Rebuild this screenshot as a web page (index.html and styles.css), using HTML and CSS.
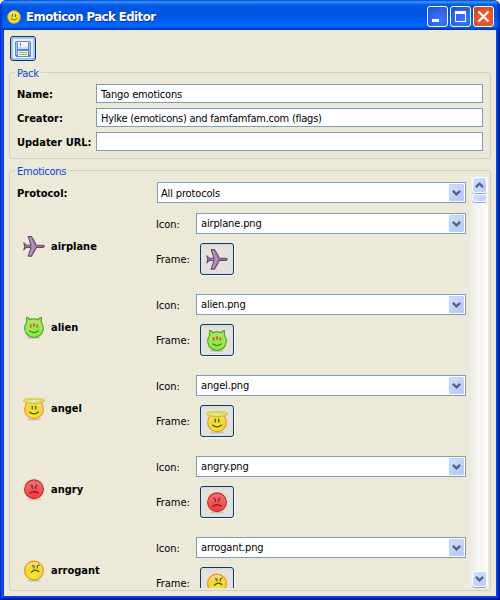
FILE: index.html
```html
<!DOCTYPE html>
<html lang="en">
<head>
<meta charset="utf-8">
<title>Emoticon Pack Editor</title>
<link rel="stylesheet" href="styles.css">
</head>
<body>
<svg class="defs" width="0" height="0" aria-hidden="true">
  <defs>
    <radialGradient id="gold" cx=".5" cy=".75" r=".75"><stop offset="0" stop-color="#f5ea25"/><stop offset=".6" stop-color="#edd83c"/><stop offset="1" stop-color="#f7e987"/></radialGradient>
    <radialGradient id="lime" cx=".5" cy=".85" r=".8"><stop offset="0" stop-color="#86ed36"/><stop offset="1" stop-color="#a8e86c"/></radialGradient>
    <radialGradient id="rose" cx=".5" cy=".85" r=".85"><stop offset="0" stop-color="#ff3535"/><stop offset="1" stop-color="#ec7373"/></radialGradient>
    <linearGradient id="plum"><stop offset="0" stop-color="#ad8bb0"/><stop offset="1" stop-color="#9a779e"/></linearGradient>
    <linearGradient id="disk" x2="1" y2="1"><stop offset="0" stop-color="#6f9be0"/><stop offset="1" stop-color="#4a72bd"/></linearGradient>
  </defs>
  <symbol id="airplane" viewBox="0 0 24 24">
    <path d="M6.2 1.5H9.4L12.5 6.5L14.2 10.2H21.3L22.4 11.3L21.3 12.4H14.2L12.5 16L9.4 21.1H6.2L9 12.4H4.2L1.8 14.8L2.8 11.3L1.8 7.8L4.2 10.2H9Z" fill="url(#plum)" stroke="#6b4673" stroke-width="1.1" stroke-linejoin="round"/>
    <path d="M8 2.8L11.6 11.3L8 19.8" fill="none" stroke="#c6aec8" stroke-width=".8"/>
  </symbol>
  <symbol id="alien" viewBox="0 0 24 24">
    <ellipse cx="12" cy="21.7" rx="7" ry="1.2" fill="#777" opacity=".3"/>
    <path d="M4.6 6.5V1.6C6 1.3 7 2.3 7.6 3.6Q12 2 16.4 3.6C17 2.3 18 1.3 19.4 1.6V6.5A9.3 9.3 0 1 1 4.6 6.5Z" fill="url(#lime)" stroke="#58a61b" stroke-width="1.2"/>
    <path d="M8.7 8.3v3.4M12 7.3v3.4M15.3 8.3v3.4" stroke="#d5641c" stroke-width="1.8"/>
    <path d="M7.3 14.6Q12 18.4 16.7 14.6" fill="none" stroke="#3c7525" stroke-width="1.2"/>
  </symbol>
  <symbol id="angel" viewBox="0 0 24 24">
    <ellipse cx="12" cy="22.3" rx="7" ry="1.2" fill="#777" opacity=".3"/>
    <circle cx="12" cy="12.3" r="9.4" fill="url(#gold)" stroke="#f09020" stroke-width="1.2"/>
    <path d="M10.3 8.7v3.8M13.7 8.7v3.8" stroke="#66591c" stroke-width="1.4"/>
    <path d="M7.3 14.8Q12 19 16.7 14.8" fill="none" stroke="#554b1c" stroke-width="1.2"/>
    <ellipse cx="12" cy="3.8" rx="10" ry="2.1" fill="#e9e5b3" stroke="#c5bd30" stroke-width="2"/>
    <ellipse cx="12" cy="3.6" rx="10" ry="1.9" fill="none" stroke="#f1ec61" stroke-width=".9"/>
  </symbol>
  <symbol id="angry" viewBox="0 0 24 24">
    <ellipse cx="12" cy="21.4" rx="7" ry="1.2" fill="#777" opacity=".3"/>
    <circle cx="12" cy="11.3" r="9.4" fill="url(#rose)" stroke="#c22b32" stroke-width="1.2"/>
    <path d="M8.4 7l2.2 1.3M15.6 7l-2.2 1.3M10.3 8v3M13.7 8v3" fill="none" stroke="#743133" stroke-width="1.3"/>
    <path d="M7.3 15.6Q12 11.6 16.7 15.6" fill="none" stroke="#68292b" stroke-width="1.3"/>
  </symbol>
  <symbol id="arrogant" viewBox="0 0 24 24">
    <ellipse cx="12" cy="21.6" rx="7" ry="1.2" fill="#777" opacity=".3"/>
    <circle cx="12" cy="11.5" r="9.4" fill="url(#gold)" stroke="#f09020" stroke-width="1.2"/>
    <path d="M10 6.6l2.6 .7M17.6 5.8l-2.6 1.2M12 7.3v2.2M15.4 7v2.2" fill="none" stroke="#5d5121" stroke-width="1.1"/>
    <path d="M9 13.6Q13.4 9 17.2 13" fill="none" stroke="#554b20" stroke-width="1.2"/>
  </symbol>
  <symbol id="smile" viewBox="0 0 14 14">
    <circle cx="7" cy="7" r="6.3" fill="url(#gold)" stroke="#f0a428" stroke-width=".9"/>
    <path d="M5.5 4v3M8.5 4v3" stroke="#7c6a1c" stroke-width="1"/>
    <path d="M3.8 8.4Q7 11.6 10.2 8.4" fill="none" stroke="#6b5d1c" stroke-width="1"/>
  </symbol>
  <symbol id="chevron" viewBox="0 0 9 6"><path d="M.9 .9L4.5 4.4L8.1 .9" fill="none" stroke="#4d6185" stroke-width="2.2"/></symbol>
</svg>

<div class="window">
  <header class="titlebar">
    <svg class="app-icon"><use href="#smile"/></svg>
    <h1>Emoticon Pack Editor</h1>
    <div class="controls">
      <button class="control" aria-label="Minimize"><svg viewBox="0 0 19 19"><path d="M4 13.5h7" stroke="#fff" stroke-width="3"/></svg></button>
      <button class="control" aria-label="Maximize"><svg viewBox="0 0 19 19"><path d="M4.5 5v9.5h10V5" fill="none" stroke="#fff"/><path d="M4 5.5h11" stroke="#fff" stroke-width="3"/></svg></button>
      <button class="control close" aria-label="Close"><svg viewBox="0 0 19 19"><path d="M4.5 4.5l10 10M14.5 4.5l-10 10" stroke="#fff" stroke-width="2.2"/></svg></button>
    </div>
  </header>

  <main class="client">
    <button class="save" aria-label="Save">
      <svg width="16" height="16" viewBox="0 0 16 16">
        <path d="M1 .5H15L15.5 1V15.5H1.5L.5 14.5V1Z" fill="url(#disk)" stroke="#5f87c8"/>
        <path d="M1.5 14V1.5H14.5V14" fill="none" stroke="#a5c4f2"/>
        <path d="M3 1h10v7H3z" fill="#f0f5fc"/><path d="M3 6h10v2H3z" fill="#c8daf4"/>
        <path d="M5.5 2v3" stroke="#5a83c8"/>
        <path d="M3 10h10v5H3z" fill="#fafcf4"/><path d="M4 11.5h8M4 13.5h8" stroke="#86bd62"/>
      </svg>
    </button>

    <section class="group pack">
      <h2>Pack</h2>
      <div class="field"><label>Name:</label><div class="input">Tango emoticons</div></div>
      <div class="field"><label>Creator:</label><div class="input creator">Hylke (emoticons) and famfamfam.com (flags)</div></div>
      <div class="field"><label>Updater URL:</label><div class="input"></div></div>
    </section>

    <section class="group emoticons">
      <h2>Emoticons</h2>
      <div class="viewport">
        <div class="list">
          <div class="protocol"><label>Protocol:</label><div class="combo"><span>All protocols</span><i class="drop"><svg><use href="#chevron"/></svg></i></div></div>
          <div class="item">
            <svg class="face"><use href="#airplane"/></svg><b>airplane</b>
            <div class="settings">
              <span class="key">Icon:</span><div class="combo"><span>airplane.png</span><i class="drop"><svg><use href="#chevron"/></svg></i></div>
              <span class="key">Frame:</span><button class="frame"><svg class="face"><use href="#airplane"/></svg></button>
            </div>
          </div>
          <div class="item">
            <svg class="face"><use href="#alien"/></svg><b>alien</b>
            <div class="settings">
              <span class="key">Icon:</span><div class="combo"><span>alien.png</span><i class="drop"><svg><use href="#chevron"/></svg></i></div>
              <span class="key">Frame:</span><button class="frame"><svg class="face"><use href="#alien"/></svg></button>
            </div>
          </div>
          <div class="item">
            <svg class="face"><use href="#angel"/></svg><b>angel</b>
            <div class="settings">
              <span class="key">Icon:</span><div class="combo"><span>angel.png</span><i class="drop"><svg><use href="#chevron"/></svg></i></div>
              <span class="key">Frame:</span><button class="frame"><svg class="face"><use href="#angel"/></svg></button>
            </div>
          </div>
          <div class="item">
            <svg class="face"><use href="#angry"/></svg><b>angry</b>
            <div class="settings">
              <span class="key">Icon:</span><div class="combo"><span>angry.png</span><i class="drop"><svg><use href="#chevron"/></svg></i></div>
              <span class="key">Frame:</span><button class="frame"><svg class="face"><use href="#angry"/></svg></button>
            </div>
          </div>
          <div class="item">
            <svg class="face"><use href="#arrogant"/></svg><b>arrogant</b>
            <div class="settings">
              <span class="key">Icon:</span><div class="combo"><span>arrogant.png</span><i class="drop"><svg><use href="#chevron"/></svg></i></div>
              <span class="key">Frame:</span><button class="frame"><svg class="face"><use href="#arrogant"/></svg></button>
            </div>
          </div>
        </div>
        <div class="scrollbar">
          <i class="arrow up"><svg><use href="#chevron"/></svg></i>
          <i class="thumb"></i>
          <i class="arrow down"><svg><use href="#chevron"/></svg></i>
        </div>
      </div>
    </section>
  </main>
</div>
</body>
</html>
```
FILE: styles.css
```css
* { box-sizing: border-box; }
body { margin: 0; background: #fff; font: 11px/14px "DejaVu Sans Condensed", "DejaVu Sans", sans-serif; font-stretch: condensed; letter-spacing: -.15px; color: #000; }
h1, h2 { margin: 0; }
button { padding: 0; font: inherit; display: grid; place-items: center; }
svg { display: block; }
.defs { position: absolute; }

.window { width: 500px; height: 600px; display: flex; flex-direction: column; overflow: hidden; background: #0831d9; border-radius: 7px 7px 0 0; padding: 0 4px 4px; box-shadow: inset 1px 0 #0019cf, inset -1px -1px #00138c, inset -2px -2px #001ea0, inset 3px 0 #0855dd, inset -4px -4px #0441e8; }
.titlebar { height: 30px; flex: none; margin: 0 -4px; padding: 3px 6px 0 7px; display: flex; align-items: center; background: linear-gradient(#0a5ce8 0, #3a93ff 5%, #2a8bff 8%, #0860e6 15%, #0055e0 24%, #0054e2 50%, #0062fa 72%, #0065ff 85%, #005bf0 91%, #003fc5 97%, #0038b8); box-shadow: inset 2px 0 2px #003cc8, inset -2px 0 2px #0030b0; }
.app-icon { width: 14px; height: 14px; margin-right: 5px; }
h1 { font-size: 13px; line-height: 18px; font-weight: bold; color: #fff; text-shadow: 1px 1px #0b2e92; letter-spacing: -.52px; white-space: nowrap; }
.controls { display: flex; gap: 2px; margin-left: auto; }
.control { width: 21px; height: 21px; border: 1px solid #fff; border-radius: 3px; background: radial-gradient(circle at 65% 70%, #3878ff, #2b62ea 60%, #1e48c5); }
.control svg { width: 19px; height: 19px; }
.close { background: radial-gradient(circle at 60% 60%, #e85a31, #df5731 55%, #bd3b1d); }

.client { height: 566px; background: #ece9d8; padding: 6px 5px 0; }
.save { width: 26px; height: 25px; margin-left: 1px; background: #edf1f8; border: 1px solid #003c74; border-radius: 3px; box-shadow: inset 0 0 0 2px #a9c2ee; }
.group { border: 1px solid #d0d0bf; border-radius: 4px; }
.group h2 { width: max-content; margin: -7px 0 0 5px; padding: 0 2px; background: #ece9d8; color: #0046d5; font-size: 11px; line-height: 14px; font-weight: normal; letter-spacing: -.25px; position: relative; top: 1px; }
.pack { height: 87px; margin-top: 11px; padding-right: 7px; }
.field { display: grid; grid-template-columns: 79px 1fr; height: 19px; margin: 4px 0 5px 7px; align-items: center; }
.field + .field { margin-top: 0; }
label { font-weight: bold; white-space: nowrap; letter-spacing: 0; padding-top: 3px; }
b { letter-spacing: 0; padding-top: 4px; }
.input { height: 19px; border: 1px solid #7f9db9; background: #fff; padding: 3px 4px 0; white-space: nowrap; }
.creator { letter-spacing: -.24px; }
.emoticons { height: 421px; margin-top: 11px; }
.emoticons h2 { margin-bottom: -1px; }
.viewport { display: flex; justify-content: space-between; height: 411px; overflow: hidden; padding-right: 2px; }
.list { width: 456px; padding: 5px 0 0 7px; }
.protocol { display: grid; grid-template-columns: 140px 309px; height: 21px; align-items: center; margin-bottom: 1px; }
.combo { display: flex; justify-content: space-between; height: 21px; padding: 1px; border: 1px solid #7f9db9; background: #fff; }
.combo > span { padding: 3px 0 0 2px; }
.item .combo > span { padding: 2px 0 0 3px; }
.drop { width: 15px; height: 17px; display: grid; place-items: center; border-radius: 2px; background: linear-gradient(135deg, #d5e2ff, #bdd0fb 60%, #aec4f7); box-shadow: inset 0 0 0 1px #c0d0f8; }
.drop svg, .arrow svg { width: 9px; height: 6px; }
.item { display: grid; grid-template-columns: 34px 105px 310px; height: 81px; align-items: center; }
.item > .face { margin: 4px 0 0 5px; }
.face { width: 24px; height: 24px; }
.settings { align-self: start; display: grid; grid-template-columns: 40px 270px; grid-template-rows: 21px 32px; row-gap: 9px; padding-top: 9px; align-items: center; }
.key { padding-top: 1px; letter-spacing: -.05px; }
.key:first-child { padding-top: 3px; }
.frame { width: 34px; height: 32px; margin-left: 4px; border: 1px solid #003c74; border-radius: 3px; background: linear-gradient(#dedbd2, #e4e2db 15%, #e2e0d9); box-shadow: 1px 1px #f8f7f2; }
.frame .face { margin-top: 1px; }
.scrollbar { width: 17px; height: 411px; display: flex; flex-direction: column; background: linear-gradient(90deg, #efede8, #fefefb); }
.arrow, .thumb { display: grid; place-items: center; width: 15px; margin-left: 1px; border: 1px solid #fff; border-radius: 3px; background: linear-gradient(135deg, #d5e2ff, #b9cdf9); box-shadow: 0 1px #8caad8; }
.arrow { height: 16px; margin-bottom: 1px; }
.up svg { transform: rotate(180deg); }
.thumb { height: 8px; }
.down { margin-top: auto; }
```
